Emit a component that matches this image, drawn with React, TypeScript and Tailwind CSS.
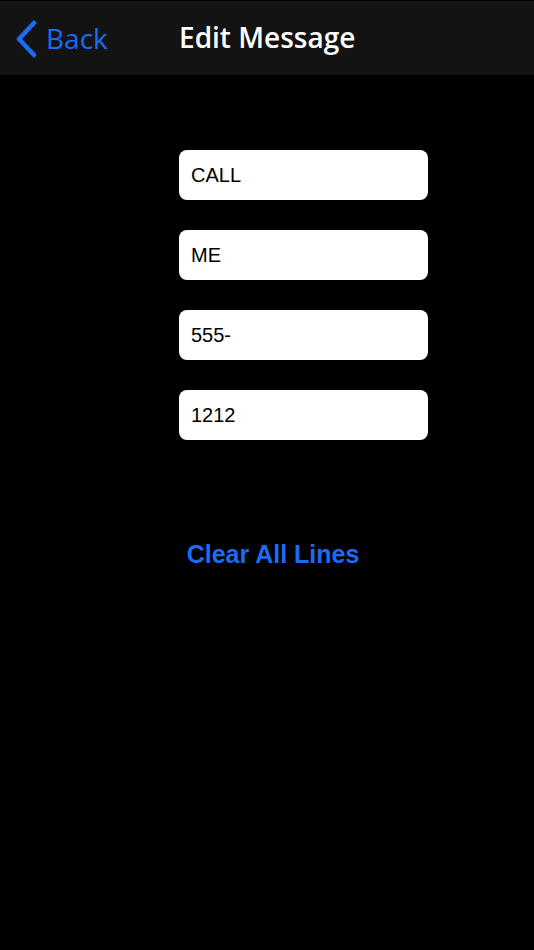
import React from "react";

export default function App() {
  const lines = ["CALL", "ME", "555-", "1212"];
  return (
    <div
      className="w-[534px] h-[950px] bg-black flex flex-col"
      style={{ fontFamily: '"Liberation Sans", Arial, sans-serif' }}
    >
      <div className="mt-px h-[74px] bg-[#131313] flex items-center relative">
        <div className="flex items-center ml-[14px] text-[#1a6cf5]">
          <svg width="24" height="38" viewBox="0 0 24 38" className="mt-[1px]">
            <path
              d="M20 3 L5 19 L20 35"
              fill="none"
              stroke="#1a6cf5"
              strokeWidth="4.5"
              strokeLinecap="round"
              strokeLinejoin="round"
            />
          </svg>
          <span className="ml-[8px] text-[28px] leading-none" style={{ fontFamily: '"Open Sans", "Liberation Sans", sans-serif' }}>Back</span>
        </div>
        <div
          className="absolute left-[179px] top-[22px] text-white text-[28px] font-semibold leading-none"
          style={{ fontFamily: '"Open Sans", "Liberation Sans", sans-serif' }}
        >
          Edit Message
        </div>
      </div>
      <div className="flex flex-col gap-[30px] pl-[179px] pt-[75px]">
        {lines.map((l) => (
          <div
            key={l}
            className="w-[249px] h-[50px] bg-white rounded-[8px] flex items-center pl-[12px] text-[20px] text-black"
          >
            {l}
          </div>
        ))}
      </div>
      <div className="flex justify-center pl-[12px] mt-[96px]">
        <span className="text-[#1a6cf5] text-[25px] font-bold">Clear All Lines</span>
      </div>
    </div>
  );
}
